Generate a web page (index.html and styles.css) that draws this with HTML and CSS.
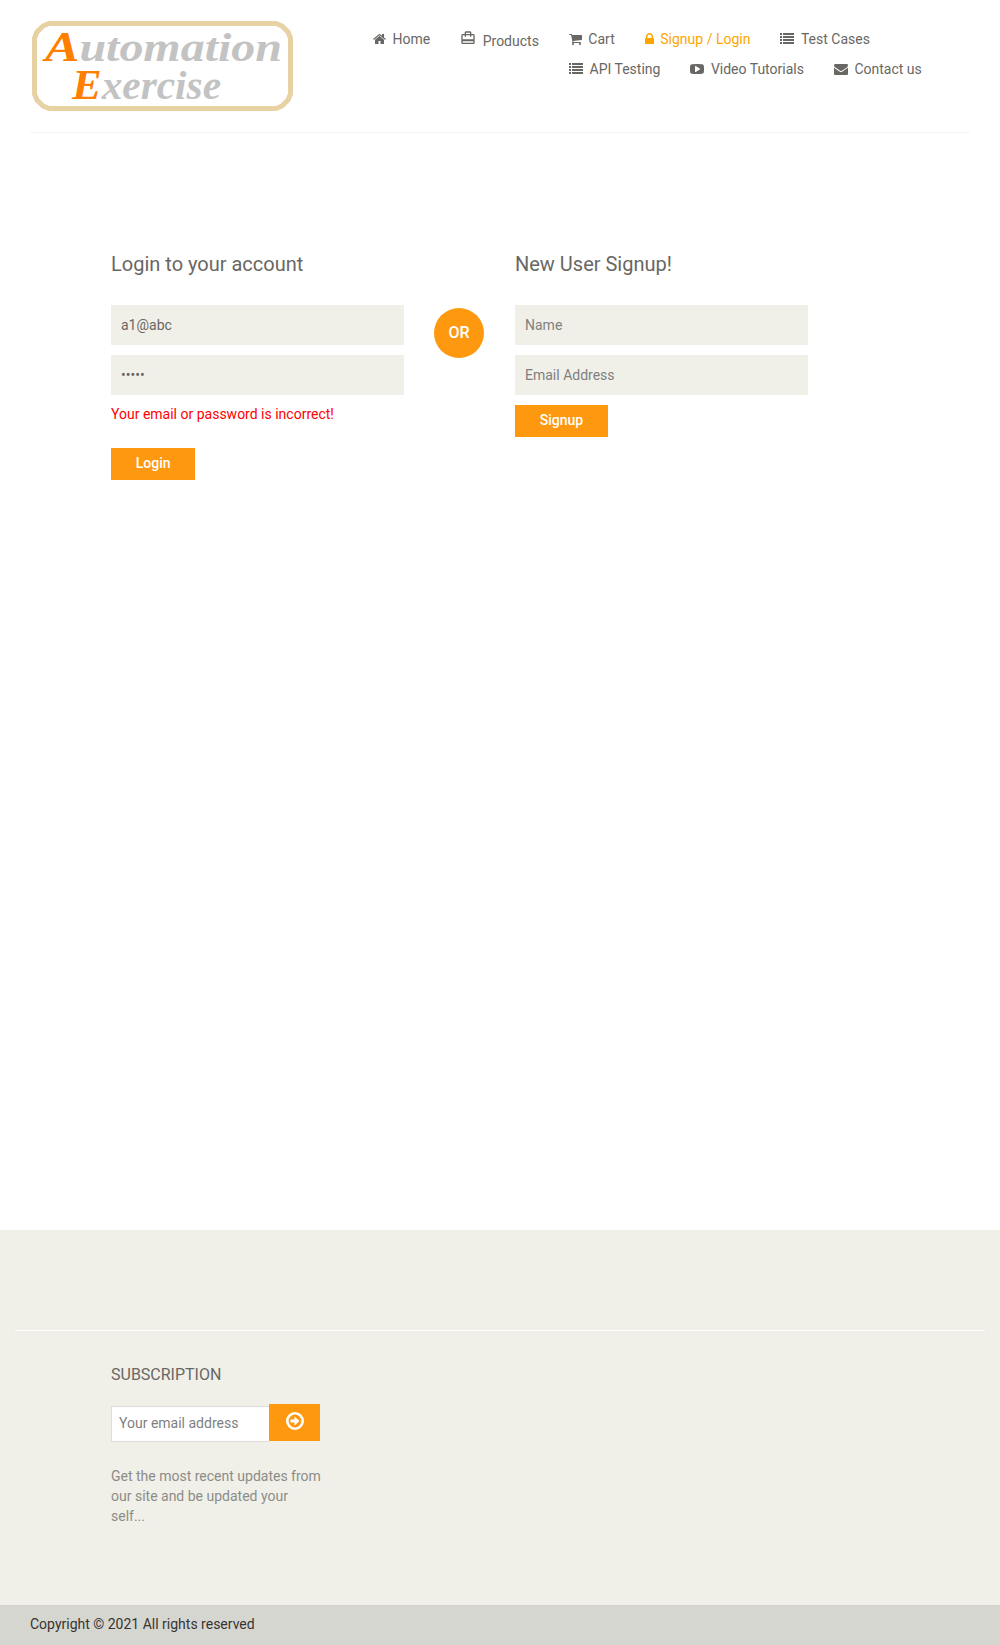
FILE: index.html
```html
<!DOCTYPE html>
<html lang="en">
<head>
<meta charset="utf-8">
<title>Automation Exercise - Signup / Login</title>
<link rel="stylesheet" href="styles.css">
</head>
<body>
<svg class="sprite" aria-hidden="true">
  <symbol id="list" viewBox="0 0 14 14"><path d="M0 1h2v2H0zM3 1h11v2H3zM0 4h2v2H0zM3 4h11v2H3zM0 7h2v2H0zM3 7h11v2H3zM0 10h2v2H0zM3 10h11v2H3z"/></symbol>
</svg>
<header class="header">
  <a class="logo">
    <svg width="261" height="90" viewBox="0 0 261 90">
      <path class="logo-frame" d="M17 2.500H244L250 5L256 11L258.500 17V73L256 79L250 85L244 87.500H17L11 85L5 79L2.500 73V17L5 11L11 5Z"/>
      <text class="logo-text" x="13" y="40" textLength="237" lengthAdjust="spacingAndGlyphs"><tspan class="logo-cap">A</tspan>utomation</text>
      <text class="logo-text" x="40" y="78" textLength="149" lengthAdjust="spacingAndGlyphs"><tspan class="logo-cap">E</tspan>xercise</text>
    </svg>
  </a>
  <nav class="menu">
    <div class="menu-row">
      <a class="item"><svg class="icon w13" viewBox="64 0 1664 1792"><path d="M1472 992v480q0 26-19 45t-45 19h-384v-384h-256v384h-384q-26 0-45-19t-19-45v-480q0-1 .5-3t.5-3l575-474 575 474q1 2 1 6zm223-69l-62 74q-8 9-21 11h-3q-13 0-21-7l-692-577-692 577q-12 8-24 7-13-2-21-11l-62-74q-8-10-7-23.500t11-21.500l719-599q32-26 76-26t76 26l244 204v-195q0-14 9-23t23-9h192q14 0 23 9t9 23v408l219 182q10 8 11 21.500t-7 23.500z"/></svg>Home</a>
      <a class="item products"><svg class="icon w16" viewBox="0 0 24 24"><path d="M20 6h-3V4c0-1.110-.89-2-2-2H9c-1.110 0-2 .89-2 2v2H4c-1.110 0-2 .89-2 2v11c0 1.110.89 2 2 2h16c1.110 0 2-.89 2-2V8c0-1.110-.89-2-2-2zM9 4h6v2H9V4zm11 15H4v-2h16v2zm0-5H4V8h3v2h2V8h6v2h2V8h3v6z"/></svg>Products</a>
      <a class="item"><svg class="icon w13" viewBox="64 0 1664 1792"><path d="M704 1536q0 52-38 90t-90 38-90-38-38-90 38-90 90-38 90 38 38 90zm896 0q0 52-38 90t-90 38-90-38-38-90 38-90 90-38 90 38 38 90zm128-1088v512q0 24-16.500 42.500t-40.500 21.500l-1044 122q13 60 13 70 0 16-24 64h920q26 0 45 19t19 45-19 45-45 19h-1024q-26 0-45-19t-19-45q0-11 8-31.500t16-36 21.500-40 15.500-29.500l-177-823h-204q-26 0-45-19t-19-45 19-45 45-19h256q16 0 28.500 6.500t19.500 15.500 13 24.500 8 26 5.500 29.500 4.500 26h1201q26 0 45 19t19 45z"/></svg>Cart</a>
      <a class="item active"><svg class="icon w9" viewBox="320 0 1152 1792"><path d="M640 768h512v-192q0-106-75-181t-181-75-181 75-75 181v192zm832 96v576q0 40-28 68t-68 28h-960q-40 0-68-28t-28-68v-576q0-40 28-68t68-28h32v-192q0-184 132-316t316-132 316 132 132 316v192h32q40 0 68 28t28 68z"/></svg>Signup / Login</a>
      <a class="item"><svg class="icon"><use href="#list"/></svg>Test Cases</a>
    </div>
    <div class="menu-row second">
      <a class="item"><svg class="icon"><use href="#list"/></svg>API Testing</a>
      <a class="item"><svg class="icon" viewBox="0 0 1792 1792"><path d="M1280 896q0-37-30-54l-512-320q-31-20-65-2-33 18-33 56v640q0 38 33 56 16 8 31 8 20 0 34-10l512-320q30-17 30-54zm512 0q0 96-1 150t-8.500 136.500-22.500 147.500q-16 73-69 123t-124 58q-222 25-671 25t-671-25q-71-8-124.500-58t-69.500-123q-14-65-21.500-147.500t-8.500-136.500-1-150 1-150 8.500-136.500 22.500-147.500q16-73 69-123t124-58q222-25 671-25t671 25q71 8 124.500 58t69.500 123q14 65 21.500 147.500t8.500 136.500 1 150z"/></svg>Video Tutorials</a>
      <a class="item"><svg class="icon" viewBox="0 0 1792 1792"><path d="M1792 710v794q0 66-47 113t-113 47h-1472q-66 0-113-47t-47-113v-794q44 49 101 87 362 246 497 345 57 42 92.500 65.500t94.500 48 110 24.500h2q51 0 110-24.500t94.500-48 92.500-65.500q170-123 498-345 57-39 100-87zm0-294q0 79-49 151t-122 123q-376 261-468 325-10 7-42.500 31t-54 38.500-52 32.500-57.500 27-50 9h-2q-23 0-50-9t-57.500-27-52-32.500-54-38.500-42.500-31q-91-64-262-182.500t-205-142.500q-62-42-117-115.500t-55-136.500q0-78 41.500-130t118.500-52h1472q65 0 112.500 47t47.500 113z"/></svg>Contact us</a>
    </div>
  </nav>
</header>
<main class="forms">
  <form class="form">
    <h2>Login to your account</h2>
    <input class="field" type="text" value="a1@abc">
    <input class="field" type="password" value="abcde">
    <p class="error">Your email or password is incorrect!</p>
    <button class="btn" type="button">Login</button>
  </form>
  <div class="or">OR</div>
  <form class="form">
    <h2>New User Signup!</h2>
    <input class="field" type="text" placeholder="Name">
    <input class="field" type="text" placeholder="Email Address">
    <button class="btn" type="button">Signup</button>
  </form>
</main>
<footer class="footer">
  <div class="subscription">
    <h2>Subscription</h2>
    <div class="subscribe-row">
      <input class="email" type="text" placeholder="Your email address">
      <button class="send" type="button" aria-label="Subscribe"><svg width="18" height="18" viewBox="0 0 18 18"><circle cx="9" cy="9" r="7.700" fill="none" stroke="currentColor" stroke-width="2.600"/><path d="M4.500 7.500H8.500V4.600L13.500 9L8.500 13.400V10.500H4.500z" fill="currentColor"/></svg></button>
    </div>
    <p>Get the most recent updates from our site and be updated your self...</p>
  </div>
  <div class="copyright">Copyright © 2021 All rights reserved</div>
</footer>
</body>
</html>
```
FILE: styles.css
```css
* { box-sizing: border-box; }
body {
  margin: 0;
  min-height: 1645px;
  display: flex;
  flex-direction: column;
  background: #fff;
  color: #696763;
  font: 400 14px/20px Roboto, sans-serif;
}
h2, p { margin: 0; font-weight: 400; }
input, button { font-family: inherit; font-size: 14px; border: 0; border-radius: 0; outline: 0; }
.sprite { display: none; }

.header {
  display: flex;
  height: 133px;
  margin: 0 30px;
  border-bottom: 1px solid #f5f5f5;
}
.logo { width: 343px; padding: 21px 0 0 2px; }
.logo svg { display: block; }
.logo-frame { fill: none; stroke: #e6d2a2; stroke-width: 5; }
.logo-text {
  font-family: "Liberation Serif", serif;
  font-style: italic;
  font-weight: 700;
  font-size: 40px;
  font-variant-ligatures: none;
  fill: #c3c3c3;
}
.logo-cap { fill: #ff8000; font-size: 43px; }

.menu { padding-top: 29px; }
.menu-row { display: flex; gap: 30px; height: 30px; }
.menu-row.second { padding-left: 196px; }
.item { display: flex; white-space: nowrap; }
.icon { width: 14px; height: 14px; margin: 3px 6.500px 0 0; fill: currentColor; flex: none; }
.w13 { width: 13px; }
.w9 { width: 9px; }
.products { padding-top: 2px; }
.w16 { width: 16px; height: 16px; margin-top: -1px; }
.active { color: orange; }

.forms { display: flex; flex: 1; padding: 119px 0 0 111px; }
.form { width: 293px; display: flex; flex-direction: column; align-items: flex-start; }
.form h2 { font-size: 20px; line-height: 24px; margin-bottom: 29px; }
.field {
  width: 293px;
  height: 40px;
  margin-bottom: 10px;
  padding: 0 10px;
  background: #f0f0e9;
  color: #696763;
}
.field::placeholder, .email::placeholder { color: #7f7f7f; }
.error { color: red; margin: -1px 0 24px; }
.btn {
  height: 32px;
  padding: 0 24.700px 2px;
  background: #fe980f;
  color: #fff;
  font-weight: 500;
}
.or {
  width: 50px;
  height: 50px;
  margin: 56px 31px 0 30px;
  border-radius: 50%;
  background: #fe980f;
  color: #fff;
  font-size: 16px;
  font-weight: 500;
  line-height: 50px;
  text-align: center;
}

.footer { background: #f0f0e9; height: 415px; display: flex; flex-direction: column; }
.subscription { flex: 1; margin: 100px 15px 0; padding: 33px 0 0 96px; border-top: 1px solid #fff; }
.subscription h2 { font-size: 16px; line-height: 22px; text-transform: uppercase; }
.subscribe-row { display: flex; height: 38px; margin: 18px 0 24px; }
.email { width: 158px; height: 36px; margin-top: 2px; padding: 0 0 2px 7px; border: 1px solid #ddd; border-right: 0; }
.send { width: 51px; height: 37px; padding: 0 0 3px; display: grid; place-items: center; background: #fe980f; color: #fff; }
.subscription p { width: 212px; color: #8c8c88; }
.copyright { height: 40px; padding: 9px 30px; background: #d6d6d0; color: #363432; }
```
